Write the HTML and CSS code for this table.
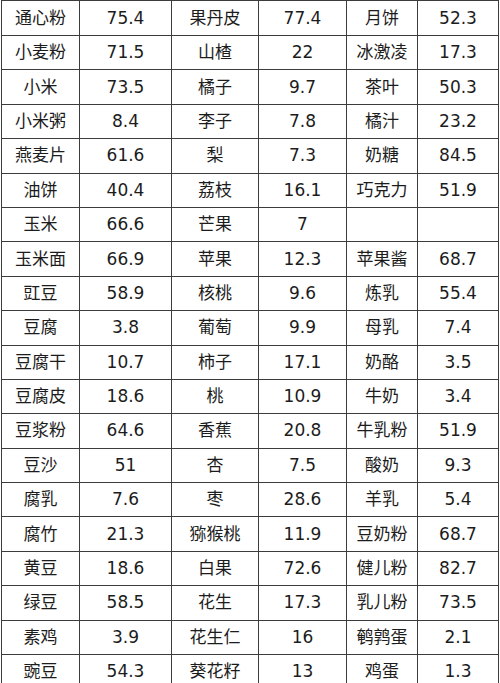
FILE: index.html
```html
<!DOCTYPE html>
<html lang="zh">
<head>
<meta charset="utf-8">
<link rel="stylesheet" href="styles.css">
</head>
<body>
<div class="table">
<div class="c">通心粉</div><div class="c">75.4</div><div class="c">果丹皮</div><div class="c">77.4</div><div class="c">月饼</div><div class="c">52.3</div>
<div class="c">小麦粉</div><div class="c">71.5</div><div class="c">山楂</div><div class="c">22</div><div class="c">冰激凌</div><div class="c">17.3</div>
<div class="c">小米</div><div class="c">73.5</div><div class="c">橘子</div><div class="c">9.7</div><div class="c">茶叶</div><div class="c">50.3</div>
<div class="c">小米粥</div><div class="c">8.4</div><div class="c">李子</div><div class="c">7.8</div><div class="c">橘汁</div><div class="c">23.2</div>
<div class="c">燕麦片</div><div class="c">61.6</div><div class="c">梨</div><div class="c">7.3</div><div class="c">奶糖</div><div class="c">84.5</div>
<div class="c">油饼</div><div class="c">40.4</div><div class="c">荔枝</div><div class="c">16.1</div><div class="c">巧克力</div><div class="c">51.9</div>
<div class="c">玉米</div><div class="c">66.6</div><div class="c">芒果</div><div class="c">7</div><div class="c"></div><div class="c"></div>
<div class="c">玉米面</div><div class="c">66.9</div><div class="c">苹果</div><div class="c">12.3</div><div class="c">苹果酱</div><div class="c">68.7</div>
<div class="c">豇豆</div><div class="c">58.9</div><div class="c">核桃</div><div class="c">9.6</div><div class="c">炼乳</div><div class="c">55.4</div>
<div class="c">豆腐</div><div class="c">3.8</div><div class="c">葡萄</div><div class="c">9.9</div><div class="c">母乳</div><div class="c">7.4</div>
<div class="c">豆腐干</div><div class="c">10.7</div><div class="c">柿子</div><div class="c">17.1</div><div class="c">奶酪</div><div class="c">3.5</div>
<div class="c">豆腐皮</div><div class="c">18.6</div><div class="c">桃</div><div class="c">10.9</div><div class="c">牛奶</div><div class="c">3.4</div>
<div class="c">豆浆粉</div><div class="c">64.6</div><div class="c">香蕉</div><div class="c">20.8</div><div class="c">牛乳粉</div><div class="c">51.9</div>
<div class="c">豆沙</div><div class="c">51</div><div class="c">杏</div><div class="c">7.5</div><div class="c">酸奶</div><div class="c">9.3</div>
<div class="c">腐乳</div><div class="c">7.6</div><div class="c">枣</div><div class="c">28.6</div><div class="c">羊乳</div><div class="c">5.4</div>
<div class="c">腐竹</div><div class="c">21.3</div><div class="c">猕猴桃</div><div class="c">11.9</div><div class="c">豆奶粉</div><div class="c">68.7</div>
<div class="c">黄豆</div><div class="c">18.6</div><div class="c">白果</div><div class="c">72.6</div><div class="c">健儿粉</div><div class="c">82.7</div>
<div class="c">绿豆</div><div class="c">58.5</div><div class="c">花生</div><div class="c">17.3</div><div class="c">乳儿粉</div><div class="c">73.5</div>
<div class="c">素鸡</div><div class="c">3.9</div><div class="c">花生仁</div><div class="c">16</div><div class="c">鹌鹑蛋</div><div class="c">2.1</div>
<div class="c">豌豆</div><div class="c">54.3</div><div class="c">葵花籽</div><div class="c">13</div><div class="c">鸡蛋</div><div class="c">1.3</div>
</div>
</body>
</html>
```
FILE: styles.css
```css
html, body {
  margin: 0;
  padding: 0;
  background: #ffffff;
}
body {
  overflow: hidden;
  height: 683px;
}
.table {
  display: grid;
  grid-template-columns: 77px 91px 86px 87px 70px 80px;
  grid-template-rows: 34px repeat(19, 33.4px);
  gap: 1px;
  padding: 1px;
  margin-left: 1px;
  width: max-content;
  background: #3c3c3c;
  font-family: "DejaVu Sans", "Noto Sans CJK SC", sans-serif;
  font-size: 17px;
  color: #1c1c1c;
}
.c {
  background: #ffffff;
  display: flex;
  align-items: center;
  justify-content: center;
  white-space: nowrap;
  line-height: 1;
}
```
